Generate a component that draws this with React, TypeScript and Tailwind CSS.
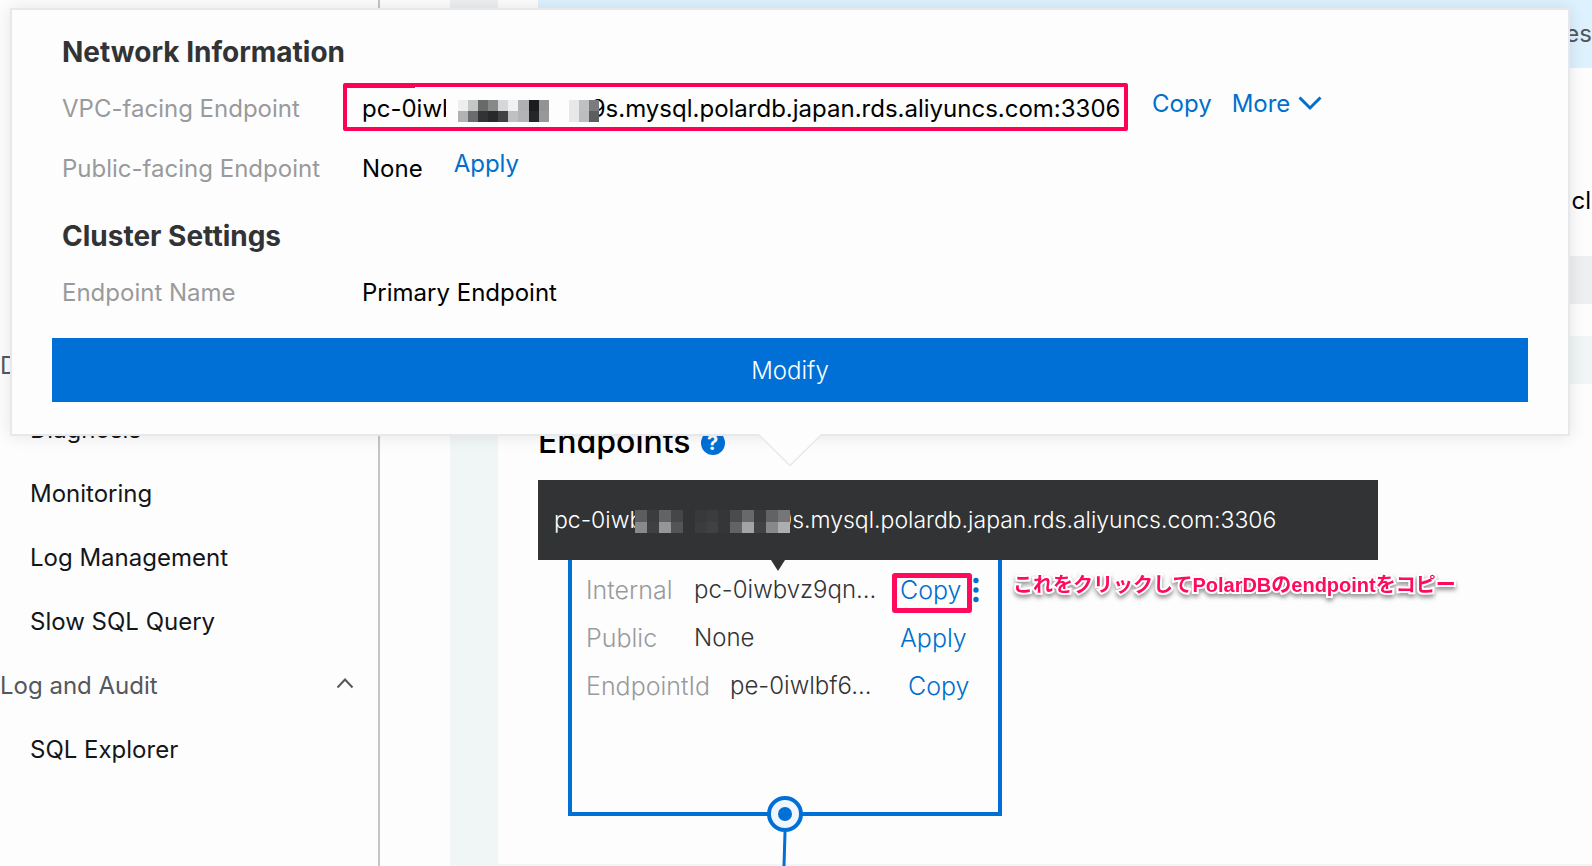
import { ReactNode } from "react";

const sidebarItems = [
  { label: "D", group: true, open: false },
  { label: "Diagnosis", group: false, open: false },
  { label: "Monitoring", group: false, open: false },
  { label: "Log Management", group: false, open: false },
  { label: "Slow SQL Query", group: false, open: false },
  { label: "Log and Audit", group: true, open: true },
  { label: "SQL Explorer", group: false, open: false },
];

// masked characters of the endpoint, one colour per block
const lightMask = [
  ["#edeeee", "#c4c5c5", "#686969", "#87888a", "#d6d7d8", "#f0f1f2", "#b0b1b2", "#1b1c1e", "#929394", "#fdfdfe", "#fdfdfe", "#e7e8ea", "#bfc0c1", "#7a7b7c"],
  ["#b1b2b2", "#6b6c6d", "#323335", "#28292b", "#404143", "#bfc0c2", "#b3b4b6", "#252628", "#979899", "#fdfdfe", "#fdfdfe", "#e7e8e9", "#bcbdbe", "#5c5d5f"],
];
const darkMask = [
  ["#5c5d5f", "#3b3c3e", "#626365", "#454648", "#323335", "#38393b", "#3b3c3e", "#353638", "#4a4b4d", "#68696b", "#3b3c3e", "#626365", "#757678"],
  ["#88898b", "#3f4042", "#959698", "#535456", "#323335", "#3b3c3e", "#404143", "#353638", "#626365", "#a3a4a6", "#414244", "#88898b", "#adaeb0"],
];

function Mosaic({ rows, className }: { rows: string[][]; className: string }) {
  return (
    <svg
      viewBox={`0 0 ${rows[0].length} ${rows.length}`}
      preserveAspectRatio="none"
      shapeRendering="crispEdges"
      aria-hidden="true"
      className={className}
    >
      {rows.map((row, y) =>
        row.map((fill, x) => (
          <rect key={`${x}-${y}`} x={x} y={y} width="1" height="1" fill={fill} />
        ))
      )}
    </svg>
  );
}

function LinkButton({ children, className = "" }: { children: ReactNode; className?: string }) {
  return (
    <button type="button" className={`text-[#0070cc] ${className}`}>
      {children}
    </button>
  );
}

function Sidebar() {
  return (
    <nav className="w-[380px] shrink-0 border-r-2 border-[#c4c5c7] pt-[334px]">
      <ul>
        {sidebarItems.map((item) => (
          <li key={item.label} className="flex h-16 items-center">
            {item.group ? (
              <button
                type="button"
                className="flex w-full items-center justify-between pr-6 text-[#55575a]"
              >
                {item.label}
                {item.open && (
                  <svg viewBox="0 0 18 18" className="mb-1 h-[18px] w-[18px]" fill="none" stroke="currentColor" strokeWidth="2">
                    <path d="M1.5 12.500 9 4.500l7.500 8" />
                  </svg>
                )}
              </button>
            ) : (
              <a href="#" className="pl-[30px] text-[#151619]">
                {item.label}
              </a>
            )}
          </li>
        ))}
      </ul>
    </nav>
  );
}

function EndpointTooltip() {
  return (
    <div
      role="tooltip"
      className="absolute left-10 top-24 flex h-20 w-[840px] items-center whitespace-nowrap bg-[#323335] pl-4 text-[23px] font-light text-white"
    >
      <span>pc-0iwb</span>
      <Mosaic rows={darkMask} className="relative z-10 -ml-2 mt-[2px] h-[23px] w-[155px] shrink-0" />
      <span className="-ml-3">9s.mysql.polardb.japan.rds.aliyuncs.com:3306</span>
      <svg viewBox="0 0 14 11" className="absolute left-[233px] top-20 h-[11px] w-[14px]">
        <path d="M0 0h14L7 11z" fill="#323335" />
      </svg>
    </div>
  );
}

function EndpointCard() {
  return (
    <div className="relative ml-[70px] mt-[54px] h-[300px] w-[434px] border-4 border-[#0070d6] pl-[14px] pt-[46px] font-light text-[#323335]">
      <div className="flex h-12 items-center">
        <span className="w-[108px] text-[25px] text-[#999a9c]">Internal</span>
        <span className="w-[206px]">pc-0iwbvz9qn...</span>
        <span className="relative">
          <LinkButton className="text-[25px]">Copy</LinkButton>
          <span className="pointer-events-none absolute -bottom-1 -left-2 -right-[10px] top-px rounded-[3px] border-[5px] border-[#ff0a5c]" />
        </span>
        <button type="button" aria-label="More actions" className="ml-[11px]">
          <svg viewBox="0 0 6 26" className="h-[26px] w-[6px]" fill="#0070cc">
            <circle cx="3" cy="3.500" r="2.700" />
            <circle cx="3" cy="13" r="2.700" />
            <circle cx="3" cy="22.500" r="2.700" />
          </svg>
        </button>
      </div>
      <div className="flex h-12 items-center">
        <span className="w-[108px] text-[25px] text-[#999a9c]">Public</span>
        <span className="w-[206px]">None</span>
        <LinkButton className="text-[25px]">Apply</LinkButton>
      </div>
      <div className="flex h-12 items-center">
        <span className="w-36 text-[25px] text-[#999a9c]">EndpointId</span>
        <span className="w-[178px]">pe-0iwlbf6...</span>
        <LinkButton className="text-[25px]">Copy</LinkButton>
      </div>
      <svg viewBox="0 0 36 70" className="absolute -bottom-[54px] left-[195px] h-[70px] w-9">
        <path d="M18 36 17 70" stroke="#0070d6" strokeWidth="3" />
        <circle cx="18" cy="18" r="16" fill="#f0f6fd" stroke="#0070d6" strokeWidth="4" />
        <circle cx="18" cy="18" r="7" fill="#0070d6" />
      </svg>
    </div>
  );
}

function EndpointPopover() {
  return (
    <div
      role="dialog"
      aria-label="Endpoint details"
      className="absolute left-[10px] right-[22px] top-2 border-2 border-[#e7e8ec] bg-[#fdfdfe] px-10 pb-8 pt-6 shadow-[0_0_16px_rgba(0,0,0,0.1)]"
    >
      <div className="px-[10px]">
        <h2 className="h-9 text-[28px] font-bold leading-9 text-[#323335]">Network Information</h2>
        <dl className="mt-[9px] text-black">
          <div className="flex h-[60px] items-center">
            <dt className="w-[300px] shrink-0 text-[#999a9c]">VPC-facing Endpoint</dt>
            <dd className="flex items-center">
              <span className="relative flex w-[766px] items-center whitespace-nowrap">
                <span>pc-0iwb</span>
                <span className="relative z-10 -ml-[11px] h-7 w-3 shrink-0 bg-[#fdfdfe]" />
                <Mosaic rows={lightMask} className="relative z-10 mt-1 h-[22px] w-[141px] shrink-0" />
                <span className="-ml-2">9s.mysql.polardb.japan.rds.aliyuncs.com:3306</span>
                <span className="pointer-events-none absolute -left-[19px] -top-2 h-12 w-[785px] rounded-[2px] border-4 border-[#ff0058]">
                  <span className="block h-px w-[68px] bg-[#ff0058]" />
                </span>
              </span>
              <LinkButton className="mb-[10px] ml-6">Copy</LinkButton>
              <LinkButton className="mb-[10px] ml-5 flex items-center gap-2">
                More
                <svg viewBox="0 0 24 16" className="h-4 w-6" fill="none" stroke="currentColor" strokeWidth="3">
                  <path d="m1.500 1.500 10.500 10.500L22.500 1.500" />
                </svg>
              </LinkButton>
            </dd>
          </div>
          <div className="flex h-[60px] items-center">
            <dt className="w-[300px] shrink-0 text-[#999a9c]">Public-facing Endpoint</dt>
            <dd className="flex items-center">
              None
              <LinkButton className="mb-[10px] ml-[31px]">Apply</LinkButton>
            </dd>
          </div>
        </dl>
        <h2 className="mt-[19px] h-9 text-[28px] font-bold leading-9 text-[#323335]">Cluster Settings</h2>
        <dl className="mt-[9px] text-black">
          <div className="flex h-[60px] items-center">
            <dt className="w-[300px] shrink-0 text-[#999a9c]">Endpoint Name</dt>
            <dd>Primary Endpoint</dd>
          </div>
        </dl>
      </div>
      <button type="button" className="mt-[15px] h-16 w-full bg-[#0070d6] pt-[2px] font-light text-white">
        Modify
      </button>
      <svg viewBox="0 0 62 34" className="absolute -bottom-[33px] left-1/2 -ml-[31px] h-[34px] w-[62px]">
        <path d="M0 0h62v2L31 32.500 0 2z" fill="#fdfdfe" />
        <path d="m0 2 31 30.500L62 2" fill="none" stroke="#e7e8ec" strokeWidth="1.500" />
      </svg>
    </div>
  );
}

export default function App() {
  return (
    <div className="relative flex min-h-screen overflow-hidden bg-[#fdfdfe] font-['Inter',sans-serif] text-[24px] leading-9">
      <Sidebar />
      <main className="ml-[70px] flex min-w-0 flex-1 flex-col">
        <section className="h-[304px] bg-[#eeeff1] pb-12 pl-12">
          <div className="h-full bg-[#fdfdfe] pl-10">
            <div className="flex h-[68px] items-center justify-end bg-[#def1ff] text-[#55575a]">
              es
            </div>
            <div className="flex h-[132px] items-end justify-end pr-px text-black">
              <span className="-mb-[19px]">cl</span>
            </div>
          </div>
        </section>
        <section className="mt-8 flex-1 bg-[#f0f6f6] pb-[2px] pl-12 pt-12">
          <div className="relative bg-[#fdfdfe] pb-12 pt-[38px]">
            <div className="flex h-10 items-center pl-10">
              <h1 className="text-[32px] font-medium text-black">Endpoints</h1>
              <button
                type="button"
                aria-label="About endpoints"
                className="ml-[10px] mt-px flex h-6 w-6 items-center justify-center rounded-full bg-[#0070d6] text-[20px] font-bold leading-6 text-white"
              >
                ?
              </button>
            </div>
            <EndpointCard />
            <EndpointTooltip />
            <p className="absolute left-[515px] top-[183px] whitespace-nowrap font-['Liberation_Sans','Noto_Sans_CJK_JP',sans-serif] text-[20px] font-bold text-[#ff0a5c] drop-shadow-[0_3px_2px_rgba(0,0,0,0.4)] [-webkit-text-stroke:4px_white] [paint-order:stroke_fill]">
              これをクリックしてPolarDBのendpointをコピー
            </p>
          </div>
        </section>
      </main>
      <EndpointPopover />
    </div>
  );
}
